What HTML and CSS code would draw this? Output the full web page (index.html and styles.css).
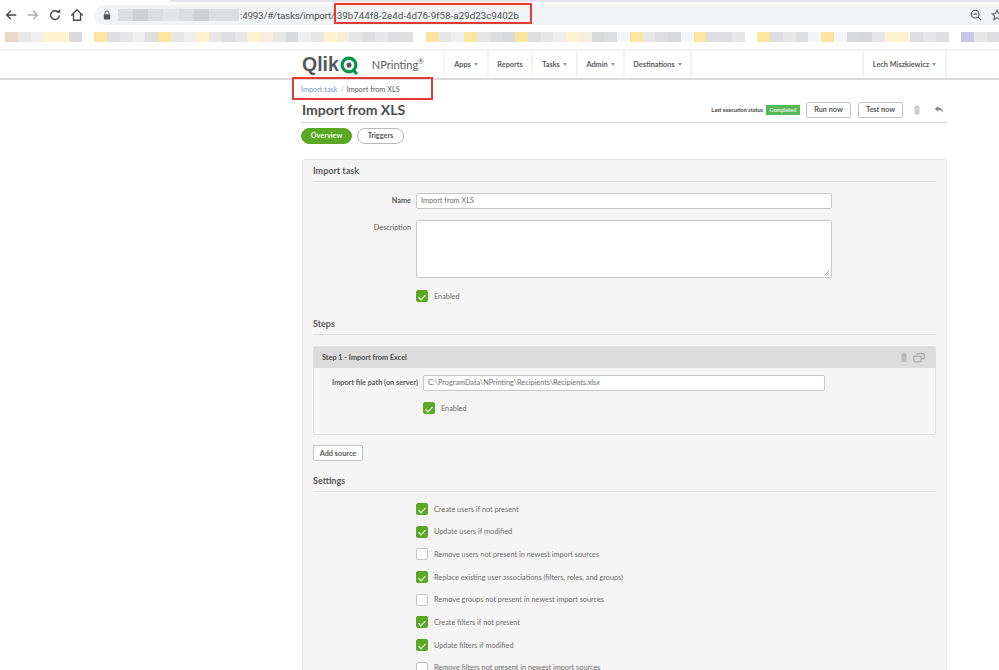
FILE: index.html
```html
<!DOCTYPE html>
<html lang="en">
<head>
<meta charset="utf-8">
<title>Import from XLS</title>
<link rel="stylesheet" href="styles.css">
</head>
<body>
<header class="chrome">
  <div class="tabline"></div>
  <div class="toolbar">
    <svg class="tool" viewBox="0 0 16 16"><path d="M14 8H3M8 3 3 8l5 5" fill="none" stroke="#444" stroke-width="1.6"/></svg>
    <svg class="tool" viewBox="0 0 16 16"><path d="M2 8h11M8 3l5 5-5 5" fill="none" stroke="#aaa" stroke-width="1.6"/></svg>
    <svg class="tool" viewBox="0 0 16 16"><path d="M13 8.500A5 5 0 1 1 11.500 4.500" fill="none" stroke="#444" stroke-width="1.6"/><path d="M9.500 5.500h4.500V1z" fill="#444"/></svg>
    <svg class="tool" viewBox="0 0 16 16"><path d="M1.500 8.500 8 2l6.500 6.500M4 7v7h8V7" fill="none" stroke="#444" stroke-width="1.500"/></svg>
    <div class="omnibox">
      <svg class="lock" viewBox="0 0 10 12"><path d="M2.500 5V3.500a2.500 2.500 0 0 1 5 0V5" fill="none" stroke="#555" stroke-width="1.200"/><rect x="1" y="5" width="8" height="6.500" rx="1" fill="#555"/></svg>
      <div class="blurhost"><i></i><i></i><i></i><i></i><i></i><i></i><i></i><i></i></div>
      <span class="url">:4993/#/tasks/import/</span><span class="url-id">39b744f8-2e4d-4d76-9f58-a29d23c9402b</span>
      <span class="omni-end">
        <svg class="tool-sm" viewBox="0 0 14 14"><circle cx="6" cy="6" r="4.500" fill="none" stroke="#555" stroke-width="1.300"/><path d="M9.500 9.500 13 13M4 6h4" stroke="#555" stroke-width="1.300"/></svg>
        <svg class="tool-sm" viewBox="0 0 14 14"><path d="M7 1.500 8.700 5.200l4 .4-3 2.700.9 4L7 10.200 3.400 12.300l.9-4-3-2.700 4-.4z" fill="none" stroke="#555" stroke-width="1.200"/></svg>
      </span>
    </div>
  </div>
  <div class="bookmarks">
    <i class="r"></i><i class="a"></i><i class="l"></i><i class="p"></i><i class="p"></i><i class="d"></i><i class="w"></i><i class="y"></i><i class="b"></i><i class="a"></i><i class="l"></i><i class="b"></i><i class="y"></i><i class="a"></i><i class="l"></i><i class="p"></i><i class="a"></i><i class="b"></i><i class="a"></i><i class="p"></i><i class="q"></i><i class="a"></i><i class="d"></i><i class="l"></i><i class="a"></i><i class="p"></i><i class="q"></i><i class="a"></i><i class="b"></i><i class="a"></i><i class="b"></i><i class="b"></i><i class="w"></i><i class="y"></i><i class="a"></i><i class="l"></i><i class="y"></i><i class="a"></i><i class="b"></i><i class="d"></i><i class="y"></i><i class="b"></i><i class="a"></i><i class="l"></i><i class="p"></i><i class="q"></i><i class="d"></i><i class="b"></i><i class="f"></i><i class="y"></i><i class="a"></i><i class="b"></i><i class="d"></i><i class="f"></i><i class="y"></i><i class="b"></i><i class="b"></i><i class="a"></i><i class="w"></i><i class="y"></i><i class="b"></i><i class="a"></i><i class="b"></i><i class="f"></i><i class="y"></i><i class="f"></i><i class="d"></i><i class="c"></i><i class="a"></i><i class="p"></i><i class="p"></i><i class="b"></i><i class="a"></i><i class="b"></i><i class="w"></i><i class="v"></i><i class="a"></i><i class="b"></i><i class="a"></i>
  </div>
</header>

<nav class="topnav">
  <div class="brand">
    <span class="qlik">Qlik</span>
    <svg class="qmark" viewBox="0 0 18 18"><circle cx="8.500" cy="8.500" r="6.500" fill="none" stroke="#009845" stroke-width="3"/><circle cx="8.500" cy="8.500" r="2.400" fill="#54565a"/><path d="M12 12.500 16 17" stroke="#009845" stroke-width="3"/></svg>
    <span class="product">NPrinting<sup>®</sup></span>
  </div>
  <a class="navitem w-apps">Apps <b class="caret"></b></a>
  <a class="navitem w-reports">Reports</a>
  <a class="navitem w-tasks">Tasks <b class="caret"></b></a>
  <a class="navitem w-admin">Admin <b class="caret"></b></a>
  <a class="navitem w-dest">Destinations <b class="caret"></b></a>
  <span class="navspace"></span>
  <a class="navitem w-user">Lech Miszkiewicz <b class="caret"></b></a>
</nav>

<main class="page">
  <div class="crumbs"><a>Import task</a><span class="sep">/</span><span>Import from XLS</span></div>
  <div class="titlebar">
    <h1>Import from XLS</h1>
    <div class="actions">
      <span class="status-label">Last execution status</span>
      <span class="status">Completed</span>
      <button class="btn btn-run">Run now</button>
      <button class="btn btn-test">Test now</button>
      <svg class="ico trash" viewBox="0 0 12 14"><path d="M4 1.500h4M1.500 3.500h9" stroke="#aaa" stroke-width="1.400"/><path d="M2.500 5h7v8.500h-7z" fill="#bbb"/><path d="M4.500 6v6.500M7.500 6v6.500" stroke="#eee"/></svg>
      <svg class="ico back" viewBox="0 0 14 12"><path d="M6 1 1 5l5 4V6.500c3 0 5 1 7 4C12.500 6 10 3.500 6 3.500z" fill="#888"/></svg>
    </div>
  </div>
  <div class="tabs">
    <span class="pill on">Overview</span>
    <span class="pill">Triggers</span>
  </div>

  <section class="panel">
    <h2>Import task</h2>
    <div class="row row-name">
      <label class="lbl">Name</label>
      <div class="field">Import from XLS</div>
    </div>
    <div class="row row-desc">
      <label class="lbl">Description</label>
      <div class="field area">
        <svg class="grip" viewBox="0 0 8 8"><path d="M7 1 1 7M7 4 4 7" stroke="#888"/></svg>
      </div>
    </div>
    <div class="check check-first"><span class="box on"></span>Enabled</div>

    <h2 class="h-steps">Steps</h2>
    <div class="step">
      <div class="step-head">
        <span>Step 1 - Import from Excel</span>
        <span class="step-icons">
          <svg class="ico-s" viewBox="0 0 12 14"><path d="M4 1.500h4M1.500 3.500h9" stroke="#999" stroke-width="1.400"/><path d="M2.500 5h7v8.500h-7z" fill="#aaa"/><path d="M4.500 6v6.500M7.500 6v6.500" stroke="#ddd"/></svg>
          <svg class="ico-c" viewBox="0 0 14 12"><path d="M4.500 3V.8h8.700v6H10M.8 4h8.700v6.500H.8z" fill="none" stroke="#999" stroke-width="1.100"/></svg>
        </span>
      </div>
      <div class="step-body">
        <div class="row">
          <label class="lbl lbl-wide">Import file path (on server)</label>
          <div class="field field-path">C:\ProgramData\NPrinting\Recipients\Recipients.xlsx</div>
        </div>
        <div class="check check-step"><span class="box on"></span>Enabled</div>
      </div>
    </div>
    <button class="btn btn-add">Add source</button>

    <h2 class="h-settings">Settings</h2>
    <ul class="settings">
      <li class="check"><span class="box on"></span>Create users if not present</li>
      <li class="check"><span class="box on"></span>Update users if modified</li>
      <li class="check"><span class="box"></span>Remove users not present in newest import sources</li>
      <li class="check"><span class="box on"></span>Replace existing user associations (filters, roles, and groups)</li>
      <li class="check"><span class="box"></span>Remove groups not present in newest import sources</li>
      <li class="check"><span class="box on"></span>Create filters if not present</li>
      <li class="check"><span class="box on"></span>Update filters if modified</li>
      <li class="check"><span class="box"></span>Remove filters not present in newest import sources</li>
    </ul>
  </section>
</main>

<div class="callout callout-url"></div>
<div class="callout callout-crumb"></div>
</body>
</html>
```
FILE: styles.css
```css
* { box-sizing: border-box; }
html, body { margin: 0; height: 670px; overflow: hidden; background: #fff; }
body { position: relative; font-family: "Lato", "Liberation Sans", sans-serif; font-size: 7.300px; color: #595959; }

/* browser chrome */
.chrome { height: 49px; }
.tabline { height: 2px; margin-left: 170px; background: #e4e4ea; }
.toolbar { display: flex; align-items: center; height: 24px; padding: 2px 0 0 4px; gap: 8px; }
.tool { width: 14px; height: 14px; flex: none; }
.toolbar .tool:nth-child(4) { margin-right: 2px; }
.omnibox { flex: 1; display: flex; align-items: center; height: 20px; margin-right: -20px; padding-left: 9px; background: #f1f3f4; border-radius: 10px 0 0 10px; font-family: "Roboto", sans-serif; font-size: 9.800px; color: #555; }
.lock { width: 8px; height: 10px; flex: none; }
.blurhost { display: flex; width: 121px; height: 12px; margin-left: 7px; flex: none; }
.blurhost i { flex: 1; background: #dcdde0; }
.blurhost i:nth-child(2), .blurhost i:nth-child(6) { background: #cfd0d3; }
.blurhost i:nth-child(4) { background: #e4e5e7; }
.url { margin-left: 1px; white-space: pre; letter-spacing: -.2px; }
.url-id { margin-left: 2px; color: #555; }
.omni-end { margin-left: auto; display: flex; gap: 9px; padding-right: 8px; position: relative; right: 8px; }
.tool-sm { width: 12px; height: 12px; }
.bookmarks { display: flex; height: 11px; margin-top: 6px; padding-left: 5px; overflow: hidden; }
.bookmarks i { flex: none; width: 12.760px; height: 10px; }
.bookmarks .r { background: #ead9c8; }
.bookmarks .a { background: #e7e7e8; }
.bookmarks .b { background: #dedddf; }
.bookmarks .c { background: #d8d8da; }
.bookmarks .d { background: #d9dadc; }
.bookmarks .l { background: #eeeeef; }
.bookmarks .f { background: #f4f5f7; }
.bookmarks .p { background: #fdf3d0; }
.bookmarks .q { background: #f6eedc; }
.bookmarks .y { background: #fbe59f; }
.bookmarks .v { background: #c9c6e8; }
.bookmarks .w { background: #fff; }

/* app nav */
.topnav { display: flex; height: 31px; padding: 0 52px 1px 302px; border-top: 2px solid #f0f0f0; border-bottom: 2px solid #dcdcdc; font-weight: 700; color: #595959; }
.brand { display: flex; align-items: center; width: 141px; flex: none; }
.qlik { font-family: "Liberation Sans", sans-serif; font-weight: 700; font-size: 19.500px; color: #54565a; }
.qmark { width: 19px; height: 19px; margin: 2px 0 0 1px; flex: none; }
.product { margin-left: 13px; font-family: "Lato", sans-serif; font-weight: 400; font-size: 11px; color: #595959; }
.product sup { font-size: 7px; line-height: 0; }
.navitem { display: flex; align-items: center; justify-content: center; gap: 3px; flex: none; border-left: 2px solid #f2f2f2; }
.w-apps { width: 44px; }
.w-reports { width: 44px; }
.w-tasks { width: 45px; }
.w-admin { width: 47px; }
.w-dest { width: 69px; border-right: 2px solid #f2f2f2; }
.navspace { flex: 1; }
.w-user { width: 85px; border-right: 2px solid #f2f2f2; }
.caret { width: 0; height: 0; border: 2.500px solid transparent; border-top: 3px solid #999; border-bottom: 0; }

/* page */
.page { width: 646px; margin-left: 301px; }
.crumbs { display: flex; height: 17px; align-items: center; padding-top: 1px; }
.crumbs a { color: #6a9cc9; }
.crumbs .sep { margin: 0 3px; color: #aaa; }
.titlebar { display: flex; align-items: center; justify-content: space-between; height: 26px; border-bottom: 1px solid #dedede; }
h1 { margin: 0; padding-left: 1px; font-size: 14px; font-weight: 700; color: #4d4d4d; }
.actions { display: flex; align-items: center; height: 100%; }
.status-label { font-size: 5.500px; font-weight: 700; color: #444; white-space: nowrap; }
.status { width: 34px; margin-left: 3px; height: 10px; line-height: 10px; text-align: center; background: #56b857; color: #e8f6e0; font-size: 5.500px; font-weight: 700; }
.btn { display: block; height: 16px; padding: 0; background: #fff; border: 1px solid #c4c4c4; border-radius: 2px; font-family: inherit; font-size: 7.300px; font-weight: 700; color: #595959; }
.btn-run { width: 45px; margin-left: 6px; }
.btn-test { width: 45px; margin-left: 7px; }
.ico { display: block; flex: none; }
.trash { width: 8px; height: 10px; margin-left: 10px; }
.back { width: 10px; height: 9px; margin: 0 3px 1px 13px; }
.tabs { display: flex; gap: 5px; margin-top: 5px; }
.pill { height: 16px; line-height: 14px; width: 47px; text-align: center; border: 1px solid #b9b9b9; border-radius: 8px; background: #fff; font-weight: 700; color: #595959; }
.pill.on { width: 51px; background: #5aa823; border-color: #5aa823; color: #eef7e4; }

.panel { margin: 15px 0 0 1px; height: 540px; padding: 0 10px; background: #f5f5f5; border: 1px solid #e6e6e6; border-radius: 3px 3px 0 0; }
h2 { margin: 0; height: 22px; line-height: 21px; border-bottom: 1px solid #dedede; font-size: 9px; font-weight: 700; color: #595959; }
.row { display: flex; align-items: flex-start; }
.lbl { width: 103px; flex: none; padding-right: 5px; text-align: right; line-height: 16px; font-weight: 700; color: #595959; }
.row-desc .lbl { font-weight: 400; }
.row-name { margin-top: 11px; }
.row-desc { margin-top: 11px; }
.field { width: 416px; height: 16px; line-height: 14px; padding-left: 4px; background: #fff; border: 1px solid #c8c8c8; border-radius: 2px; color: #6e6e6e; }
.area { position: relative; height: 58px; }
.grip { position: absolute; right: 1px; bottom: 1px; width: 6px; height: 6px; }
.check { display: flex; align-items: center; height: 12px; color: #6e6e6e; }
.box { width: 12px; height: 12px; flex: none; margin-right: 6px; background: #fff; border: 1px solid #c2c2c2; border-radius: 2px; }
.box.on { position: relative; background: #5aa823; border-color: #5aa823; }
.box.on::after { content: ""; position: absolute; left: 3px; top: 1.500px; width: 3px; height: 6px; border: solid #fff; border-width: 0 1.500px 1.500px 0; transform: rotate(45deg); }
.check-first { margin: 12px 0 0 103px; }
.h-steps { margin-top: 11px; }
.step { height: 89px; margin-top: 11px; background: #f5f5f5; border: 1px solid #e0e0e0; border-radius: 2px; }
.step-head { display: flex; justify-content: space-between; align-items: center; height: 21px; padding: 0 10px 0 8px; background: #dcdcdc; font-weight: 700; color: #4d4d4d; }
.step-icons { display: flex; align-items: center; gap: 5px; }
.ico-s { width: 8px; height: 11px; }
.ico-c { width: 12px; height: 10px; }
.step-body .row { margin-top: 7px; }
.lbl-wide { width: 109px; white-space: nowrap; }
.field-path { width: 402px; }
.check-step { margin: 11px 0 0 109px; }
.btn-add { width: 50px; margin-top: 10px; }
.h-settings { margin-top: 9px; }
.settings { margin: 11px 0 0; padding: 0 0 0 103px; list-style: none; }
.settings .check { margin-bottom: 10.700px; }

/* annotation boxes drawn on the screenshot */
.callout { position: absolute; border: 2px solid #e53935; }
.callout-url { left: 334px; top: 3px; width: 198px; height: 21px; }
.callout-crumb { left: 292px; top: 77px; width: 141px; height: 23px; }
```
